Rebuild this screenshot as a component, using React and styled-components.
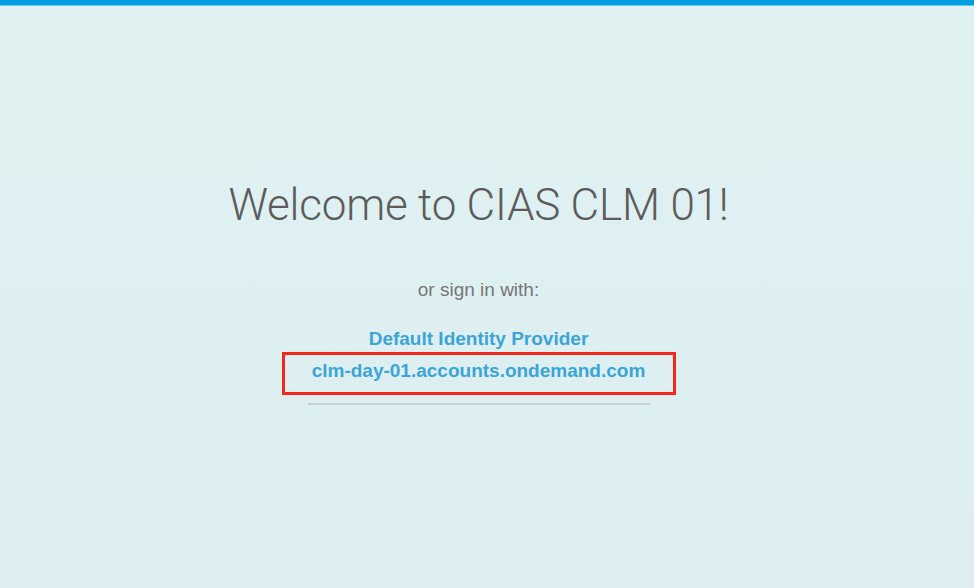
import React from "react";
import styled, { createGlobalStyle } from "styled-components";

const Global = createGlobalStyle`
  html, body { margin: 0; padding: 0; height: 100%; }
  body {
    background: linear-gradient(180deg, #dff2f1 0%, #ddedf1 100%);
    font-family: "Liberation Sans", Arial, sans-serif;
  }
  #root { min-height: 100vh; }
`;

const Page = styled.div`
  min-height: 588px;
  display: flex;
  flex-direction: column;
`;

const TopBar = styled.div`
  height: 5px;
  background: #039ee0;
  border-bottom: 1px solid #6cc6ec;
`;

const Content = styled.main`
  display: flex;
  flex-direction: column;
  align-items: center;
  padding-right: 17px;
  padding-top: 168px;
`;

const Title = styled.h1`
  margin: 0;
  font-family: Roboto, "Liberation Sans", Arial, sans-serif;
  font-weight: 300;
  font-size: 44px;
  letter-spacing: -0.2px;
  line-height: 62px;
  color: #5c5c5c;
`;

const Subtitle = styled.p`
  margin: 42px 0 0;
  font-size: 19px;
  line-height: 24px;
  color: #767676;
`;

const Providers = styled.div`
  margin-top: 25px;
  display: flex;
  flex-direction: column;
  align-items: center;
  width: 342px;
  border-bottom: 2px solid #c7cfd1;
  padding-bottom: 8px;
`;

const ProviderLink = styled.a`
  display: flex;
  justify-content: center;
  font-size: 19px;
  font-weight: 700;
  line-height: 24px;
  color: #3ba4d9;
  text-decoration: none;
  box-sizing: border-box;
  white-space: nowrap;
  ${(p) =>
    p.$highlight
      ? `
    width: 394px;
    height: 43px;
    margin-top: 1px;
    align-items: center;
    border: 3px solid #f5271b;
    padding-bottom: 5px;
  `
      : ``}
`;

export default function App() {
  return (
    <>
      <Global />
      <Page>
        <TopBar />
        <Content>
          <Title>Welcome to CIAS CLM 01!</Title>
          <Subtitle>or sign in with:</Subtitle>
          <Providers>
            <ProviderLink href="#">Default Identity Provider</ProviderLink>
            <ProviderLink href="#" $highlight>
              clm-day-01.accounts.ondemand.com
            </ProviderLink>
          </Providers>
        </Content>
      </Page>
    </>
  );
}
